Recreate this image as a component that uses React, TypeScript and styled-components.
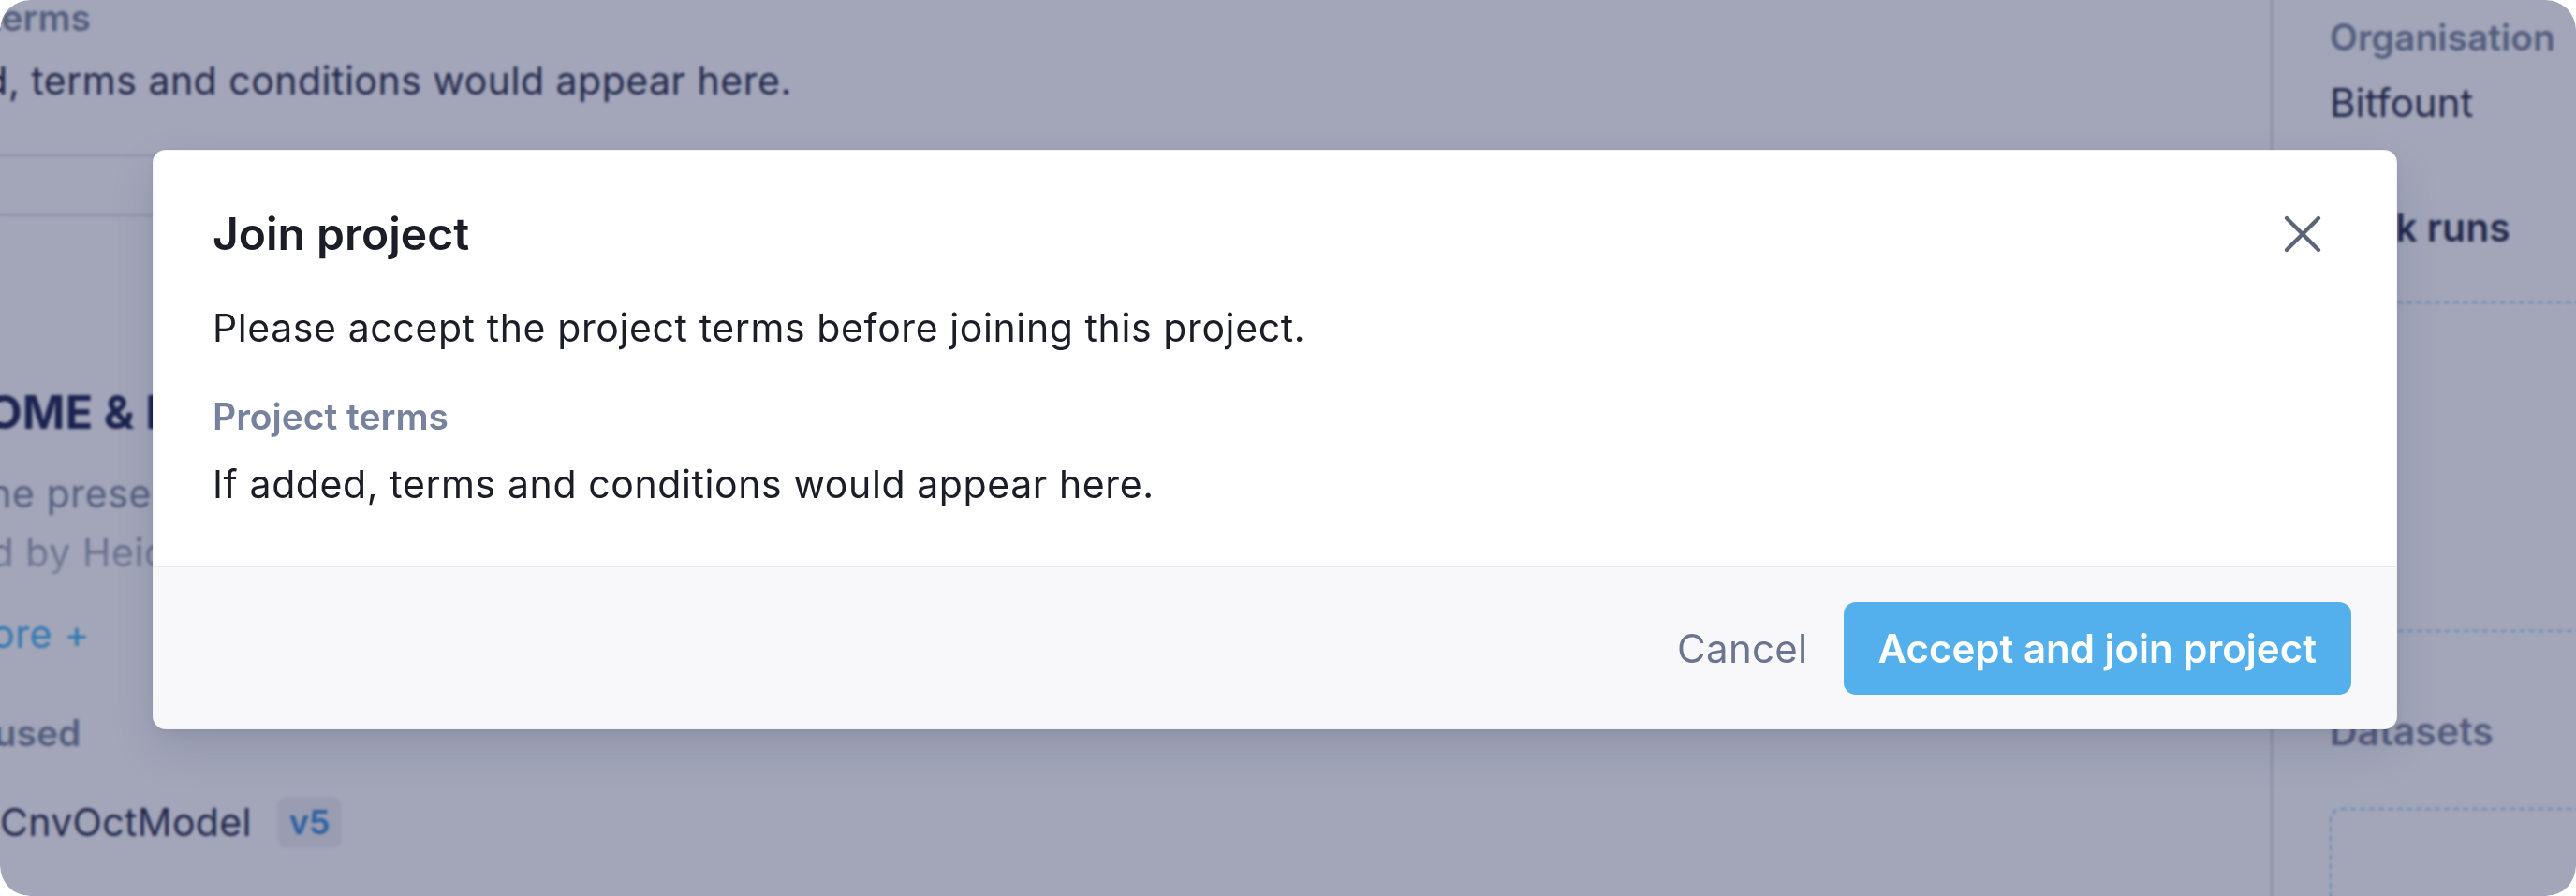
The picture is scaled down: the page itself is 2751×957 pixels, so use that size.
import React from "react";
import styled, { createGlobalStyle } from "styled-components";
import { X, Box } from "lucide-react";

const GlobalStyle = createGlobalStyle`
  html, body {
    margin: 0;
    padding: 0;
    background: #ffffff;
  }
  body {
    font-family: Inter, "Noto Sans", "Liberation Sans", sans-serif;
    -webkit-font-smoothing: antialiased;
  }
  * {
    box-sizing: border-box;
  }
`;

const Frame = styled.div`
  position: relative;
  display: flex;
  width: 2751px;
  height: 957px;
  border-radius: 32px;
  overflow: hidden;
  background: #ffffff;
`;

/* ---------- page behind the dialog ---------- */

const Main = styled.main`
  flex: 1;
  min-width: 0;
  overflow: hidden;
`;

// the page is scrolled sideways in the capture, so content starts off-screen
const MainInner = styled.div`
  margin: -8px 0 0 -155px;
`;

const TermsSection = styled.section`
  padding-bottom: 50px;
  border-bottom: 2px solid #d3d5dc;
`;

const TaskSection = styled.section`
  margin-top: 62px;
  padding-top: 180px;
  border-top: 2px solid #d3d5dc;
`;

interface LabelProps {
  $gap?: number;
}

const FieldLabel = styled.div<LabelProps>`
  margin-top: ${(props) => props.$gap ?? 0}px;
  font-size: 39px;
  line-height: 54px;
  font-weight: 600;
  color: #6a778f;
  white-space: nowrap;
`;

const FieldText = styled.div`
  margin-top: 12px;
  font-size: 41px;
  letter-spacing: 0.5px;
  line-height: 57px;
  color: #0b1030;
  white-space: nowrap;
`;

const TaskHeading = styled.h3`
  margin: 0;
  font-size: 49px;
  line-height: 60px;
  font-weight: 700;
  color: #000839;
  text-transform: uppercase;
  white-space: nowrap;
`;

const Description = styled.p`
  margin: 25px 0 0;
  font-size: 41px;
  letter-spacing: 0.6px;
  line-height: 63px;
  color: #6a778f;
  white-space: nowrap;
  -webkit-mask-image: linear-gradient(to bottom, #000 50%, rgba(0, 0, 0, 0.45) 100%);
  mask-image: linear-gradient(to bottom, #000 50%, rgba(0, 0, 0, 0.45) 100%);
`;

const ReadMore = styled.a`
  display: block;
  margin-top: 27px;
  font-size: 41px;
  letter-spacing: 0.6px;
  line-height: 57px;
  color: #27a7f0;
  white-space: nowrap;
`;

const ModelRow = styled.div`
  display: flex;
  align-items: center;
  margin-top: 40px;
  height: 57px;
`;

const ModelIcon = styled.span`
  display: flex;
  width: 56px;
  margin-right: 99px;
  color: #6a778f;
`;

const ModelName = styled.span`
  font-size: 41px;
  letter-spacing: 0.3px;
  line-height: 57px;
  color: #0b1030;
  margin-right: 27px;
`;

const VersionBadge = styled.span`
  height: 55px;
  padding: 0 13px;
  border-radius: 10px;
  background: #eeeef1;
  color: #1a78d0;
  font-size: 36px;
  line-height: 55px;
  font-weight: 600;
`;

const Sidebar = styled.aside`
  flex-shrink: 0;
  width: 326px;
  border-left: 2px solid #cbcdd7;
  padding: 13px 0 0 61px;
  overflow: hidden;
`;

const SideInner = styled.div`
  width: 470px;
`;

const SideValue = styled.div`
  margin-top: 14px;
  font-size: 42px;
  line-height: 57px;
  color: #0b1030;
`;

interface SideHeadingProps {
  $muted?: boolean;
  $gap: number;
}

const SideHeading = styled.div<SideHeadingProps>`
  margin-top: ${(props) => props.$gap}px;
  font-size: 41px;
  line-height: 54px;
  font-weight: 600;
  color: ${(props) => (props.$muted ? "#6a7390" : "#0b1030")};
`;

interface EmptyBoxProps {
  $height: number;
  $gap: number;
}

const EmptyBox = styled.div<EmptyBoxProps>`
  margin-top: ${(props) => props.$gap}px;
  height: ${(props) => props.$height}px;
  border: 2px dashed #8cc8f5;
  border-radius: 12px;
`;

/* ---------- dialog ---------- */

const Backdrop = styled.div`
  position: absolute;
  inset: 0;
  display: flex;
  align-items: flex-start;
  padding: 160px 0 0 163px;
  background: rgba(60, 66, 106, 0.47);
  backdrop-filter: blur(1.5px);
`;

const Dialog = styled.div`
  width: 2397px;
  border-radius: 14px;
  overflow: hidden;
  background: #ffffff;
  border: 1px solid rgba(20, 24, 60, 0.06);
  box-shadow: 0 20px 50px rgba(20, 24, 60, 0.12), 0 4px 10px rgba(20, 24, 60, 0.06);
`;

const DialogHeader = styled.div`
  display: flex;
  align-items: center;
  justify-content: space-between;
  padding: 55px 63px 0;
`;

const DialogTitle = styled.h2`
  margin: 0;
  font-size: 48px;
  line-height: 60px;
  font-weight: 600;
  color: #1b1e27;
`;

const CloseButton = styled.button`
  display: flex;
  align-items: center;
  justify-content: center;
  width: 68px;
  height: 68px;
  padding: 0;
  margin-right: 3px;
  border: none;
  background: transparent;
  color: #5d6478;
  cursor: pointer;
`;

const DialogBody = styled.div`
  padding: 35px 63px 55px;
`;

const Intro = styled.p`
  margin: 0;
  font-size: 41px;
  letter-spacing: 0.6px;
  line-height: 63px;
  color: #1b1e27;
`;

const TermsLabel = styled.div`
  margin-top: 34px;
  font-size: 39px;
  line-height: 58px;
  font-weight: 600;
  color: #76829e;
`;

const TermsText = styled.p`
  margin: 12px 0 0;
  font-size: 41px;
  letter-spacing: 0.6px;
  line-height: 63px;
  color: #1b1e27;
`;

const DialogFooter = styled.div`
  display: flex;
  align-items: center;
  justify-content: flex-end;
  gap: 38px;
  height: 174px;
  padding: 0 48px;
  border-top: 2px solid #e8e9ee;
  background: #f8f8fa;
`;

const CancelButton = styled.button`
  padding: 0;
  border: none;
  background: transparent;
  font-family: inherit;
  font-size: 42px;
  letter-spacing: 0.3px;
  line-height: 57px;
  color: #6b7590;
  cursor: pointer;
`;

const PrimaryButton = styled.button`
  height: 99px;
  padding: 0 37px;
  border: none;
  border-radius: 13px;
  background: #53b0ec;
  font-family: inherit;
  font-size: 42px;
  font-weight: 600;
  color: #ffffff;
  cursor: pointer;
`;

const App: React.FC = () => {
  return (
    <>
      <GlobalStyle />
      <Frame>
        <Main>
          <MainInner>
            <TermsSection>
              <FieldLabel>Project terms</FieldLabel>
              <FieldText>If added, terms and conditions would appear here.</FieldText>
            </TermsSection>
            <TaskSection>
              <TaskHeading>Outcome &amp; Detection</TaskHeading>
              <Description>
                Notes the presence of choroidal neovascularisation in OCT images
                <br />
                scanned by Heidelberg Spectralis devices.
              </Description>
              <ReadMore>View more +</ReadMore>
              <FieldLabel $gap={50}>Models used</FieldLabel>
              <ModelRow>
                <ModelIcon>
                  <Box size={56} strokeWidth={1.5} />
                </ModelIcon>
                <ModelName>CnvOctModel</ModelName>
                <VersionBadge>v5</VersionBadge>
              </ModelRow>
            </TaskSection>
          </MainInner>
        </Main>

        <Sidebar>
          <SideInner>
            <FieldLabel>Organisation</FieldLabel>
            <SideValue>Bitfount</SideValue>
            <SideHeading $gap={78}>Task runs</SideHeading>
            <EmptyBox $gap={52} $height={353} />
            <SideHeading $gap={79} $muted>
              Datasets
            </SideHeading>
            <EmptyBox $gap={55} $height={240} />
          </SideInner>
        </Sidebar>

        <Backdrop>
          <Dialog role="dialog" aria-labelledby="join-title">
            <DialogHeader>
              <DialogTitle id="join-title">Join project</DialogTitle>
              <CloseButton aria-label="Close">
                <X size={68} strokeWidth={1.5} />
              </CloseButton>
            </DialogHeader>
            <DialogBody>
              <Intro>Please accept the project terms before joining this project.</Intro>
              <TermsLabel>Project terms</TermsLabel>
              <TermsText>If added, terms and conditions would appear here.</TermsText>
            </DialogBody>
            <DialogFooter>
              <CancelButton>Cancel</CancelButton>
              <PrimaryButton>Accept and join project</PrimaryButton>
            </DialogFooter>
          </Dialog>
        </Backdrop>
      </Frame>
    </>
  );
};

export default App;
